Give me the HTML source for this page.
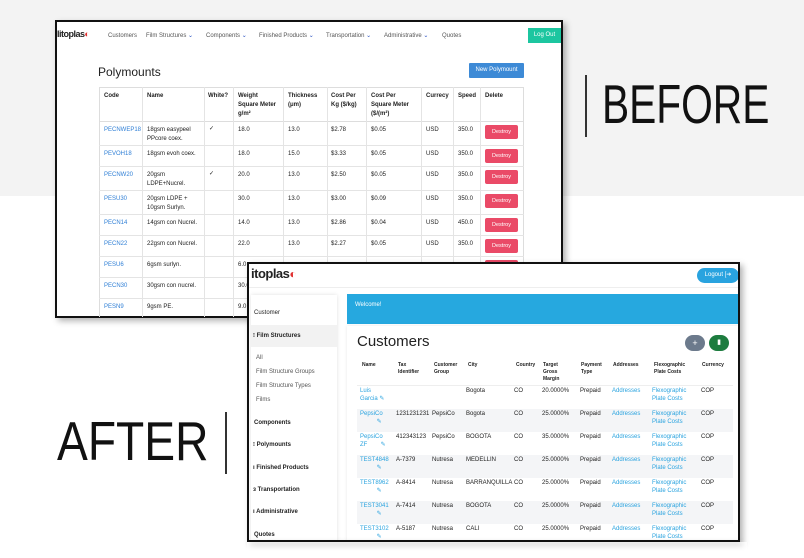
<!DOCTYPE html>
<html><head><meta charset="utf-8"><style>
*{margin:0;padding:0;box-sizing:border-box}
body{width:804px;height:558px;position:relative;overflow:hidden;background:#fff;font-family:"Liberation Sans",sans-serif;color:#222}
.a{position:absolute;white-space:nowrap}
.t{font-size:6px;line-height:8px}
.lnk{color:#2f7fd6}
.blu{color:#29a3df}
.big{font-size:55px;color:#111;font-weight:400;transform-origin:0 0}
.destroy{position:absolute;left:485px;width:33px;height:14px;background:#ea4a67;border-radius:2px;color:#fff;font-size:5.5px;line-height:14px;text-align:center}
</style></head><body>
<div class="a" style="left:0;top:0;width:804px;height:196px;background:#f3f3f3"></div>
<!-- BEFORE label -->
<div class="a" style="left:585px;top:75px;width:2px;height:62px;background:#333"></div>
<div class="a big" style="left:602px;top:72px;line-height:64px;transform:scaleX(0.74)">BEFORE</div>
<!-- AFTER label -->
<div class="a big" style="left:57px;top:409px;line-height:64px;transform:scaleX(0.84)">AFTER</div>
<div class="a" style="left:225px;top:412px;width:2px;height:62px;background:#333"></div>

<!-- BEFORE frame -->
<div class="a" style="left:55px;top:20px;width:508px;height:298px;background:#fff;border:2px solid #111;box-shadow:3px 3px 6px rgba(0,0,0,.3);overflow:hidden">
</div>
<div class="a" style="left:57px;top:29px;font-size:9px;font-weight:bold;letter-spacing:-.5px;color:#222">litoplas<span style="color:#e03030">&#9680;</span></div>
<div class="a t" style="left:108px;top:32px;color:#555">Customers</div>
<div class="a t" style="left:146px;top:32px;color:#555">Film Structures <span style="color:#2850c0">&#8964;</span></div>
<div class="a t" style="left:206px;top:32px;color:#555">Components <span style="color:#2850c0">&#8964;</span></div>
<div class="a t" style="left:259px;top:32px;color:#555">Finished Products <span style="color:#2850c0">&#8964;</span></div>
<div class="a t" style="left:326px;top:32px;color:#555">Transportation <span style="color:#2850c0">&#8964;</span></div>
<div class="a t" style="left:384px;top:32px;color:#555">Administrative <span style="color:#2850c0">&#8964;</span></div>
<div class="a t" style="left:442px;top:32px;color:#555">Quotes</div>
<div class="a t" style="left:528px;top:28px;width:33px;height:15px;background:#1cc6a0;color:#fff;line-height:15px;text-align:center">Log Out</div>
<div class="a" style="left:98px;top:65px;font-size:12px;color:#222">Polymounts</div>
<div class="a t" style="left:469px;top:63px;width:55px;height:15px;background:#3d8ad6;color:#fff;line-height:15px;text-align:center;border-radius:1px">New Polymount</div>
<div class="a" style="left:99px;top:87px;width:425px;height:230px;border:1px solid #ddd;border-bottom:none"></div>
<div class="a" style="left:99px;top:121px;width:425px;height:1px;background:#ddd"></div>
<div class="a" style="left:142px;top:87px;width:1px;height:230px;background:#e4e4e4"></div>
<div class="a" style="left:204px;top:87px;width:1px;height:230px;background:#e4e4e4"></div>
<div class="a" style="left:233px;top:87px;width:1px;height:230px;background:#e4e4e4"></div>
<div class="a" style="left:283px;top:87px;width:1px;height:230px;background:#e4e4e4"></div>
<div class="a" style="left:327px;top:87px;width:1px;height:230px;background:#e4e4e4"></div>
<div class="a" style="left:366px;top:87px;width:1px;height:230px;background:#e4e4e4"></div>
<div class="a" style="left:421px;top:87px;width:1px;height:230px;background:#e4e4e4"></div>
<div class="a" style="left:453px;top:87px;width:1px;height:230px;background:#e4e4e4"></div>
<div class="a" style="left:480px;top:87px;width:1px;height:230px;background:#e4e4e4"></div>
<div class="a t" style="left:104px;top:92px;font-weight:bold">Code</div>
<div class="a t" style="left:147px;top:92px;font-weight:bold">Name</div>
<div class="a t" style="left:208px;top:92px;font-weight:bold">White?</div>
<div class="a t" style="left:238px;top:92px;font-weight:bold;line-height:9px">Weight<br>Square Meter<br>g/m²</div>
<div class="a t" style="left:288px;top:92px;font-weight:bold;line-height:9px">Thickness<br>(μm)</div>
<div class="a t" style="left:331px;top:92px;font-weight:bold;line-height:9px">Cost Per<br>Kg ($/kg)</div>
<div class="a t" style="left:371px;top:92px;font-weight:bold;line-height:9px">Cost Per<br>Square Meter<br>($/(m²)</div>
<div class="a t" style="left:426px;top:92px;font-weight:bold">Currecy</div>
<div class="a t" style="left:458px;top:92px;font-weight:bold">Speed</div>
<div class="a t" style="left:485px;top:92px;font-weight:bold">Delete</div>
<div class="a" style="left:99px;top:145px;width:425px;height:1px;background:#e4e4e4"></div>
<div class="a" style="left:99px;top:166px;width:425px;height:1px;background:#e4e4e4"></div>
<div class="a" style="left:99px;top:190px;width:425px;height:1px;background:#e4e4e4"></div>
<div class="a" style="left:99px;top:214px;width:425px;height:1px;background:#e4e4e4"></div>
<div class="a" style="left:99px;top:235px;width:425px;height:1px;background:#e4e4e4"></div>
<div class="a" style="left:99px;top:256px;width:425px;height:1px;background:#e4e4e4"></div>
<div class="a" style="left:99px;top:277px;width:425px;height:1px;background:#e4e4e4"></div>
<div class="a" style="left:99px;top:298px;width:425px;height:1px;background:#e4e4e4"></div>

<div class="a t lnk" style="left:104px;top:126px">PECNWEP18</div><div class="a t" style="left:147px;top:126px;line-height:9px">18gsm easypeel<br>PPcore coex.</div><div class="a t" style="left:209px;top:125px">✓</div><div class="a t" style="left:238px;top:126px">18.0</div><div class="a t" style="left:288px;top:126px">13.0</div><div class="a t" style="left:331px;top:126px">$2.78</div><div class="a t" style="left:371px;top:126px">$0.05</div><div class="a t" style="left:426px;top:126px">USD</div><div class="a t" style="left:458px;top:126px">350.0</div><div class="destroy" style="top:125px">Destroy</div>
<div class="a t lnk" style="left:104px;top:150px">PEVOH18</div><div class="a t" style="left:147px;top:150px">18gsm evoh coex.</div><div class="a t" style="left:238px;top:150px">18.0</div><div class="a t" style="left:288px;top:150px">15.0</div><div class="a t" style="left:331px;top:150px">$3.33</div><div class="a t" style="left:371px;top:150px">$0.05</div><div class="a t" style="left:426px;top:150px">USD</div><div class="a t" style="left:458px;top:150px">350.0</div><div class="destroy" style="top:149px">Destroy</div>
<div class="a t lnk" style="left:104px;top:171px">PECNW20</div><div class="a t" style="left:147px;top:171px;line-height:9px">20gsm<br>LDPE+Nucrel.</div><div class="a t" style="left:209px;top:170px">✓</div><div class="a t" style="left:238px;top:171px">20.0</div><div class="a t" style="left:288px;top:171px">13.0</div><div class="a t" style="left:331px;top:171px">$2.50</div><div class="a t" style="left:371px;top:171px">$0.05</div><div class="a t" style="left:426px;top:171px">USD</div><div class="a t" style="left:458px;top:171px">350.0</div><div class="destroy" style="top:170px">Destroy</div>
<div class="a t lnk" style="left:104px;top:195px">PESU30</div><div class="a t" style="left:147px;top:195px;line-height:9px">20gsm LDPE +<br>10gsm Surlyn.</div><div class="a t" style="left:238px;top:195px">30.0</div><div class="a t" style="left:288px;top:195px">13.0</div><div class="a t" style="left:331px;top:195px">$3.00</div><div class="a t" style="left:371px;top:195px">$0.09</div><div class="a t" style="left:426px;top:195px">USD</div><div class="a t" style="left:458px;top:195px">350.0</div><div class="destroy" style="top:194px">Destroy</div>
<div class="a t lnk" style="left:104px;top:219px">PECN14</div><div class="a t" style="left:147px;top:219px">14gsm con Nucrel.</div><div class="a t" style="left:238px;top:219px">14.0</div><div class="a t" style="left:288px;top:219px">13.0</div><div class="a t" style="left:331px;top:219px">$2.86</div><div class="a t" style="left:371px;top:219px">$0.04</div><div class="a t" style="left:426px;top:219px">USD</div><div class="a t" style="left:458px;top:219px">450.0</div><div class="destroy" style="top:218px">Destroy</div>
<div class="a t lnk" style="left:104px;top:240px">PECN22</div><div class="a t" style="left:147px;top:240px">22gsm con Nucrel.</div><div class="a t" style="left:238px;top:240px">22.0</div><div class="a t" style="left:288px;top:240px">13.0</div><div class="a t" style="left:331px;top:240px">$2.27</div><div class="a t" style="left:371px;top:240px">$0.05</div><div class="a t" style="left:426px;top:240px">USD</div><div class="a t" style="left:458px;top:240px">350.0</div><div class="destroy" style="top:239px">Destroy</div>
<div class="a t lnk" style="left:104px;top:261px">PESU6</div><div class="a t" style="left:147px;top:261px">6gsm surlyn.</div><div class="a t" style="left:238px;top:261px">6.0</div><div class="destroy" style="top:260px">Destroy</div>
<div class="a t lnk" style="left:104px;top:282px">PECN30</div><div class="a t" style="left:147px;top:282px">30gsm con nucrel.</div><div class="a t" style="left:238px;top:282px">30.0</div>
<div class="a t lnk" style="left:104px;top:303px">PESN9</div><div class="a t" style="left:147px;top:303px">9gsm PE.</div><div class="a t" style="left:238px;top:303px">9.0</div>

<!-- AFTER frame -->
<div class="a" style="left:247px;top:262px;width:493px;height:280px;background:#fff;border:2px solid #111;box-shadow:3px 3px 6px rgba(0,0,0,.3);overflow:hidden">
  <div class="a" style="left:0;top:0;width:491px;height:24px;background:#fff;border-bottom:1px solid #eee"></div>
  <div class="a" style="left:2px;top:2px;font-size:13px;font-weight:bold;letter-spacing:-.5px;color:#222">itoplas<span style="color:#e03030;font-size:12px">&#9680;</span></div>
  <div class="a" style="left:448px;top:4px;width:42px;height:15px;background:#29a3df;border-radius:8px;color:#fff;font-size:6px;line-height:15px;text-align:center">Logout [➔</div>
  <div class="a" style="left:2px;top:31px;width:86px;height:250px;background:#fff;box-shadow:0 0 4px rgba(0,0,0,.12)"></div>
  <div class="a" style="left:2px;top:61px;width:86px;height:22px;background:#f2f2f2"></div>
  <div class="a t" style="left:5px;top:45px">Customer</div>
  <div class="a t" style="left:4px;top:68px;font-weight:bold">⁝ Film Structures</div>
  <div class="a t" style="left:7px;top:90px;color:#555">All</div>
  <div class="a t" style="left:7px;top:104px;color:#555">Film Structure Groups</div>
  <div class="a t" style="left:7px;top:118px;color:#555">Film Structure Types</div>
  <div class="a t" style="left:7px;top:132px;color:#555">Films</div>
  <div class="a t" style="left:5px;top:155px;font-weight:bold">Components</div>
  <div class="a t" style="left:4px;top:177px;font-weight:bold">⁝ Polymounts</div>
  <div class="a t" style="left:4px;top:200px;font-weight:bold">ı Finished Products</div>
  <div class="a t" style="left:4px;top:222px;font-weight:bold">ɜ Transportation</div>
  <div class="a t" style="left:4px;top:244px;font-weight:bold">ı Administrative</div>
  <div class="a t" style="left:5px;top:267px;font-weight:bold">Quotes</div>
  <div class="a" style="left:98px;top:30px;width:393px;height:30px;background:#26a8df"></div>
  <div class="a t" style="left:106px;top:37px;color:#fff">Welcome!</div>
  <div class="a" style="left:98px;top:62px;width:393px;height:220px;background:#fff;box-shadow:0 0 3px rgba(0,0,0,.1)"></div>
  <div class="a" style="left:108px;top:69px;font-size:15px;color:#222">Customers</div>
  <div class="a" style="left:436px;top:71px;width:20px;height:16px;border-radius:8px;background:#6c7a8c;color:#fff;font-size:9px;line-height:16px;text-align:center">+</div>
  <div class="a" style="left:460px;top:71px;width:20px;height:16px;border-radius:8px;background:#1d7c3f;color:#fff;font-size:7px;line-height:16px;text-align:center">▮</div>
  <div class="a t" style="left:113px;top:98px;font-weight:bold;font-size:5px;line-height:7px">Name</div>
  <div class="a t" style="left:149px;top:98px;font-weight:bold;font-size:5px;line-height:7px">Tax<br>Identifier</div>
  <div class="a t" style="left:185px;top:98px;font-weight:bold;font-size:5px;line-height:7px">Customer<br>Group</div>
  <div class="a t" style="left:219px;top:98px;font-weight:bold;font-size:5px;line-height:7px">City</div>
  <div class="a t" style="left:267px;top:98px;font-weight:bold;font-size:5px;line-height:7px">Country</div>
  <div class="a t" style="left:294px;top:98px;font-weight:bold;font-size:5px;line-height:7px">Target<br>Gross<br>Margin</div>
  <div class="a t" style="left:332px;top:98px;font-weight:bold;font-size:5px;line-height:7px">Payment<br>Type</div>
  <div class="a t" style="left:364px;top:98px;font-weight:bold;font-size:5px;line-height:7px">Addresses</div>
  <div class="a t" style="left:405px;top:98px;font-weight:bold;font-size:5px;line-height:7px">Flexographic<br>Plate Costs</div>
  <div class="a t" style="left:453px;top:98px;font-weight:bold;font-size:5px;line-height:7px">Currency</div>
  <div class="a" style="left:108px;top:121px;width:376px;height:1px;background:#eee"></div>
  <div class="a" style="left:108px;top:145px;width:376px;height:23px;background:#f4f5f7"></div>
  <div class="a" style="left:108px;top:191px;width:376px;height:23px;background:#f4f5f7"></div>
  <div class="a" style="left:108px;top:237px;width:376px;height:23px;background:#f4f5f7"></div>
</div>
<div class="a t blu" style="left:360px;top:387px">Luis<br>Garcia <span>✎</span></div><div class="a t" style="left:466px;top:387px">Bogota</div><div class="a t" style="left:514px;top:387px">CO</div><div class="a t" style="left:542px;top:387px">20.0000%</div><div class="a t" style="left:580px;top:387px">Prepaid</div><div class="a t blu" style="left:612px;top:387px">Addresses</div><div class="a t blu" style="left:652px;top:387px">Flexographic<br>Plate Costs</div><div class="a t" style="left:701px;top:387px">COP</div>
<div class="a t blu" style="left:360px;top:410px">PepsiCo<br>&nbsp;&nbsp;&nbsp;&nbsp;&nbsp;&nbsp;&nbsp;&nbsp;&nbsp;&nbsp;✎</div><div class="a t" style="left:396px;top:410px">1231231231</div><div class="a t" style="left:432px;top:410px">PepsiCo</div><div class="a t" style="left:466px;top:410px">Bogota</div><div class="a t" style="left:514px;top:410px">CO</div><div class="a t" style="left:542px;top:410px">25.0000%</div><div class="a t" style="left:580px;top:410px">Prepaid</div><div class="a t blu" style="left:612px;top:410px">Addresses</div><div class="a t blu" style="left:652px;top:410px">Flexographic<br>Plate Costs</div><div class="a t" style="left:701px;top:410px">COP</div>
<div class="a t blu" style="left:360px;top:433px">PepsiCo<br>ZF&nbsp;&nbsp;&nbsp;&nbsp;&nbsp;&nbsp;&nbsp;&nbsp;✎</div><div class="a t" style="left:396px;top:433px">412343123</div><div class="a t" style="left:432px;top:433px">PepsiCo</div><div class="a t" style="left:466px;top:433px">BOGOTA</div><div class="a t" style="left:514px;top:433px">CO</div><div class="a t" style="left:542px;top:433px">35.0000%</div><div class="a t" style="left:580px;top:433px">Prepaid</div><div class="a t blu" style="left:612px;top:433px">Addresses</div><div class="a t blu" style="left:652px;top:433px">Flexographic<br>Plate Costs</div><div class="a t" style="left:701px;top:433px">COP</div>
<div class="a t blu" style="left:360px;top:456px">TEST4848<br>&nbsp;&nbsp;&nbsp;&nbsp;&nbsp;&nbsp;&nbsp;&nbsp;&nbsp;&nbsp;✎</div><div class="a t" style="left:396px;top:456px">A-7379</div><div class="a t" style="left:432px;top:456px">Nutresa</div><div class="a t" style="left:466px;top:456px">MEDELLIN</div><div class="a t" style="left:514px;top:456px">CO</div><div class="a t" style="left:542px;top:456px">25.0000%</div><div class="a t" style="left:580px;top:456px">Prepaid</div><div class="a t blu" style="left:612px;top:456px">Addresses</div><div class="a t blu" style="left:652px;top:456px">Flexographic<br>Plate Costs</div><div class="a t" style="left:701px;top:456px">COP</div>
<div class="a t blu" style="left:360px;top:479px">TEST8962<br>&nbsp;&nbsp;&nbsp;&nbsp;&nbsp;&nbsp;&nbsp;&nbsp;&nbsp;&nbsp;✎</div><div class="a t" style="left:396px;top:479px">A-8414</div><div class="a t" style="left:432px;top:479px">Nutresa</div><div class="a t" style="left:466px;top:479px">BARRANQUILLA</div><div class="a t" style="left:514px;top:479px">CO</div><div class="a t" style="left:542px;top:479px">25.0000%</div><div class="a t" style="left:580px;top:479px">Prepaid</div><div class="a t blu" style="left:612px;top:479px">Addresses</div><div class="a t blu" style="left:652px;top:479px">Flexographic<br>Plate Costs</div><div class="a t" style="left:701px;top:479px">COP</div>
<div class="a t blu" style="left:360px;top:502px">TEST3041<br>&nbsp;&nbsp;&nbsp;&nbsp;&nbsp;&nbsp;&nbsp;&nbsp;&nbsp;&nbsp;✎</div><div class="a t" style="left:396px;top:502px">A-7414</div><div class="a t" style="left:432px;top:502px">Nutresa</div><div class="a t" style="left:466px;top:502px">BOGOTA</div><div class="a t" style="left:514px;top:502px">CO</div><div class="a t" style="left:542px;top:502px">25.0000%</div><div class="a t" style="left:580px;top:502px">Prepaid</div><div class="a t blu" style="left:612px;top:502px">Addresses</div><div class="a t blu" style="left:652px;top:502px">Flexographic<br>Plate Costs</div><div class="a t" style="left:701px;top:502px">COP</div>
<div class="a t blu" style="left:360px;top:525px">TEST3102<br>&nbsp;&nbsp;&nbsp;&nbsp;&nbsp;&nbsp;&nbsp;&nbsp;&nbsp;&nbsp;✎</div><div class="a t" style="left:396px;top:525px">A-5187</div><div class="a t" style="left:432px;top:525px">Nutresa</div><div class="a t" style="left:466px;top:525px">CALI</div><div class="a t" style="left:514px;top:525px">CO</div><div class="a t" style="left:542px;top:525px">25.0000%</div><div class="a t" style="left:580px;top:525px">Prepaid</div><div class="a t blu" style="left:612px;top:525px">Addresses</div><div class="a t blu" style="left:652px;top:525px">Flexographic<br>Plate Costs</div><div class="a t" style="left:701px;top:525px">COP</div>
<div class="a" style="left:247px;top:542px;width:500px;height:16px;background:#fff"></div>
<div class="a" style="left:247px;top:540px;width:493px;height:2px;background:#111;box-shadow:3px 3px 6px rgba(0,0,0,.3)"></div>
</body></html>
